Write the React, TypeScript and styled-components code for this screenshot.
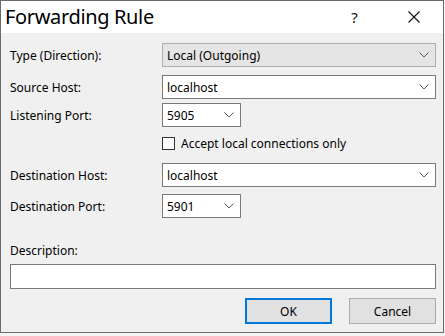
import React from 'react';
import styled, { createGlobalStyle } from 'styled-components';

const GlobalStyle = createGlobalStyle`
  html, body {
    margin: 0;
    padding: 0;
    background: #f4f4f4;
  }
  body {
    font-family: "Segoe UI", "Noto Sans", "Open Sans", sans-serif;
    color: #000;
  }
`;

const Window = styled.div`
  box-sizing: border-box;
  width: 444px;
  height: 333px;
  border: 1px solid #6b6b6b;
  background: #f0f0f0;
  display: flex;
  flex-direction: column;
`;

const TitleBar = styled.div`
  height: 32px;
  background: #fff;
  display: flex;
  align-items: center;
`;

const Title = styled.div`
  flex: 1;
  padding-left: 4px;
  font-size: 20px;
  line-height: 32px;
  letter-spacing: -0.35px;
`;

const TitleButton = styled.div`
  width: 59px;
  height: 32px;
  display: flex;
  align-items: center;
  justify-content: center;
  font-size: 15px;
  color: #111;
`;

const Body = styled.div`
  flex: 1;
  padding: 10px 7px 0 9px;
  display: flex;
  flex-direction: column;
  font-size: 12px;
`;

const Row = styled.div<{ $mt: number }>`
  display: flex;
  align-items: center;
  height: 24px;
  margin-top: ${p => p.$mt}px;
`;

const Label = styled.div`
  width: 152px;
  flex: none;
`;

const Combo = styled.div<{ $width: number; $readonly?: boolean }>`
  box-sizing: border-box;
  width: ${p => p.$width}px;
  height: 24px;
  border: 1px solid ${p => (p.$readonly ? '#adadad' : '#7a7a7a')};
  background: ${p => (p.$readonly ? '#e5e5e5' : '#fff')};
  display: flex;
  align-items: center;
  padding: 0 6px 0 4px;
  svg {
    margin-left: auto;
  }
`;

const CheckLabel = styled.label`
  display: flex;
  align-items: center;
  gap: 6px;
  margin-left: 152px;
`;

const CheckBox = styled.span`
  box-sizing: border-box;
  width: 13px;
  height: 13px;
  border: 1px solid #333;
  background: #fff;
`;

const DescLabel = styled.div`
  margin-top: 25px;
  height: 16px;
  line-height: 16px;
`;

const TextBox = styled.div`
  box-sizing: border-box;
  margin-top: 5px;
  height: 25px;
  border: 1px solid #7a7a7a;
  background: #fff;
`;

const Buttons = styled.div`
  display: flex;
  justify-content: flex-end;
  gap: 17px;
  margin-top: 9px;
`;

const Button = styled.div<{ $default?: boolean }>`
  box-sizing: border-box;
  width: 87px;
  height: 26px;
  display: flex;
  align-items: center;
  justify-content: center;
  background: #e1e1e1;
  border: ${p => (p.$default ? '2px solid #0078d7' : '1px solid #adadad')};
`;

const Chevron = () => (
  <svg width="10" height="6" viewBox="0 0 10 6">
    <path d="M0.5 0.5 L5 5 L9.5 0.5" fill="none" stroke="#5a5a5a" strokeWidth="1" />
  </svg>
);

const CloseIcon = () => (
  <svg width="12" height="12" viewBox="0 0 12 12">
    <path d="M0.5 0.5 L11.5 11.5 M11.5 0.5 L0.5 11.5" stroke="#111" strokeWidth="1.1" />
  </svg>
);

const App = () => (
  <>
    <GlobalStyle />
    <Window>
      <TitleBar>
        <Title>Forwarding Rule</Title>
        <TitleButton>?</TitleButton>
        <TitleButton>
          <CloseIcon />
        </TitleButton>
      </TitleBar>
      <Body>
        <Row $mt={0}>
          <Label>Type (Direction):</Label>
          <Combo $width={274} $readonly>
            Local (Outgoing)
            <Chevron />
          </Combo>
        </Row>
        <Row $mt={8}>
          <Label>Source Host:</Label>
          <Combo $width={274}>
            localhost
            <Chevron />
          </Combo>
        </Row>
        <Row $mt={4}>
          <Label>Listening Port:</Label>
          <Combo $width={79}>
            5905
            <Chevron />
          </Combo>
        </Row>
        <Row $mt={4}>
          <CheckLabel>
            <CheckBox />
            Accept local connections only
          </CheckLabel>
        </Row>
        <Row $mt={8}>
          <Label>Destination Host:</Label>
          <Combo $width={274}>
            localhost
            <Chevron />
          </Combo>
        </Row>
        <Row $mt={7}>
          <Label>Destination Port:</Label>
          <Combo $width={79}>
            5901
            <Chevron />
          </Combo>
        </Row>
        <DescLabel>Description:</DescLabel>
        <TextBox />
        <Buttons>
          <Button $default>OK</Button>
          <Button>Cancel</Button>
        </Buttons>
      </Body>
    </Window>
  </>
);

export default App;
